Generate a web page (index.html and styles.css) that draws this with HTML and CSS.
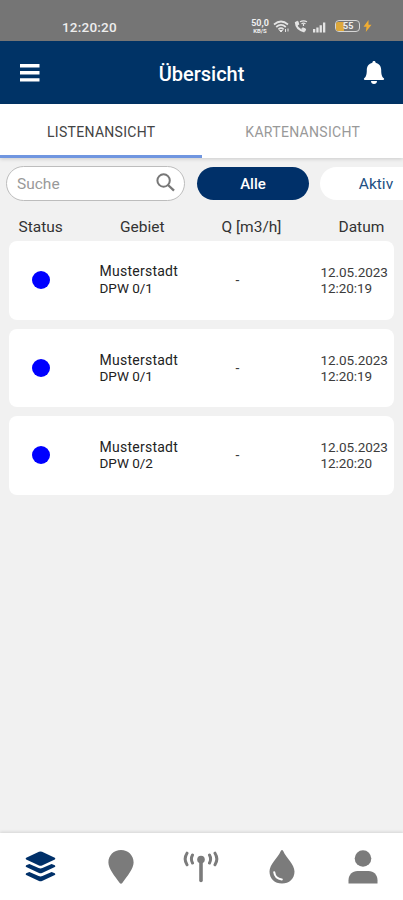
FILE: index.html
```
<!DOCTYPE html>
<html lang="de">
<head>
<meta charset="utf-8">
<title>Übersicht</title>
<link rel="stylesheet" href="styles.css">
</head>
<body>
<div class="statusbar">
  <span class="clock">12:20:20</span>
  <div class="system">
    <span class="speed"><b>50,0</b><b class="unit">KB/S</b></span>
    <svg class="wifi" width="17" height="13" viewBox="0 0 17 13" fill="none" stroke="#e4e4e4" stroke-width="1.7"><path d="M1 4.5Q8 -1.5 15 4.5M3.2 7Q8 2.8 12.8 7M5.4 9.3Q8 7 10.6 9.3"/><path d="M6.5 10.5h3L8 12zM12.5 9v3M15 8.5v3" fill="#e4e4e4" stroke-width="1"/></svg>
    <svg class="call" width="14" height="13" viewBox="0 0 14 13" fill="none" stroke="#e4e4e4"><path d="M1.8 2Q2 9.5 10.5 11.4" stroke-width="2"/><path d="M1 2.6L3.8 1.2 4.8 4.4 3 5.5M7.5 9.2l1.2-1.4 3 1.3-1 2.5" fill="#e4e4e4"/><path d="M6 1.8Q9.5 0 13 1.800M7.500 3.700Q9.500 2.500 11.500 3.700M9.500 4v2" stroke-width="1.200"/></svg>
    <svg class="signal" width="13" height="11" viewBox="0 0 13 11" fill="#e4e4e4"><path d="M0 7h2.300v3.500H0zM3.300 5.500h2.300v5H3.300zM6.600 3.300h2.300v7.200H6.600zM10 .5h2.300v10H10z"/></svg>
    <span class="battery"><i></i><b>55</b></span>
    <svg class="bolt" width="9" height="12" viewBox="0 0 9 12" fill="#efac32"><path d="M5.500 0L.5 6.700h3L2.800 12 8.500 4.800h-3z"/></svg>
  </div>
</div>
<header class="appbar">
  <svg class="menu" width="20" height="18" viewBox="0 0 20 18" fill="#fff"><path d="M0 0h19.500v3.400H0zM0 7h19.500v3.400H0zM0 14.200h19.500v3.400H0z"/></svg>
  <h1>Übersicht</h1>
  <svg class="bell" width="22" height="24" viewBox="0 0 22 24" fill="#fff"><path d="M11 0c1 0 1.600.7 1.600 1.700 3.600.8 5.600 3.700 5.600 7.300 0 5.200 1 7 2.600 8.300.7.7.2 1.800-.8 1.800H2c-1 0-1.500-1.100-.8-1.800C2.800 16 3.800 14.200 3.800 9c0-3.600 2-6.500 5.600-7.300C9.400.7 10 0 11 0zM8 20h6c0 1.800-1.200 3-3 3s-3-1.200-3-3z"/></svg>
</header>
<nav class="tabs">
  <a class="tab active"><span>LISTENANSICHT</span></a>
  <a class="tab"><span>KARTENANSICHT</span></a>
</nav>
<main>
  <div class="filters">
    <div class="search">
      <span>Suche</span>
      <svg width="19" height="19" viewBox="0 0 19 19" fill="none" stroke="#777" stroke-width="2"><circle cx="7.600" cy="7.500" r="6.200"/><path d="M12 12l6 5.700" stroke-width="2.300"/></svg>
    </div>
    <div class="chip selected">Alle</div>
    <div class="chip">Aktiv</div>
  </div>
  <div class="columns">
    <span>Status</span><span>Gebiet</span><span>Q [m3/h]</span><span>Datum</span>
  </div>
  <div class="list">
    <article class="card first"><i class="dot"></i><div class="area">Musterstadt<br><span>DPW 0/1</span></div><div class="flow">-</div><div class="date">12.05.2023<br>12:20:19</div></article>
    <article class="card"><i class="dot"></i><div class="area">Musterstadt<br><span>DPW 0/1</span></div><div class="flow">-</div><div class="date">12.05.2023<br>12:20:19</div></article>
    <article class="card"><i class="dot"></i><div class="area">Musterstadt<br><span>DPW 0/2</span></div><div class="flow">-</div><div class="date">12.05.2023<br>12:20:20</div></article>
  </div>
</main>
<footer class="bottomnav">
  <a><svg width="31" height="31" viewBox="0 0 31 31" fill="#003069"><path d="M14 .7q1.500-.6 3 0L29.800 6.800q1.200.9 0 1.800L17 14.500q-1.500.6-3 0L1.200 8.600q-1.200-.9 0-1.800z"/><path d="M1.200 14.300l3.200-1.400 9.200 4.100q1.900.8 3.800 0l9.200-4.100 3.200 1.400q1.200.9 0 1.800L17 22q-1.500.6-3 0L1.200 16.100q-1.200-.9 0-1.800z"/><path d="M1.200 22.300l3.200-1.400 9.200 4.100q1.900.8 3.800 0l9.200-4.100 3.200 1.400q1.200.9 0 1.800L17 30q-1.500.6-3 0L1.200 24.100q-1.200-.9 0-1.800z"/></svg></a>
  <a><svg width="26" height="34" viewBox="0 0 26 34" fill="#7b7b7b"><path d="M13 0c7.200 0 12.600 5.400 12.600 12.400 0 6-6 13.200-11.300 20.600q-1.300 1.500-2.600 0C6.400 25.600.4 18.400.4 12.400.4 5.400 5.800 0 13 0z"/></svg></a>
  <a><svg width="36" height="32" viewBox="0 0 36 32" fill="none" stroke="#7b7b7b" stroke-width="3" stroke-linecap="round"><path d="M4 2.200Q.3 8 4 13.800M9.500 4Q7.300 8 9.500 12M32 2.200Q35.700 8 32 13.800M26.500 4Q28.700 8 26.500 12"/><path d="M18 9v20.500" stroke-width="3.600"/><circle cx="18" cy="8.600" r="3.800" fill="#7b7b7b" stroke="none"/></svg></a>
  <a><svg width="26" height="34" viewBox="0 0 26 34"><path d="M11.800 1q1.200-2 2.400 0C17.400 8.300 25.500 14.500 25.500 21.500 25.500 28.600 20.200 33.600 13 33.600S.5 28.600.5 21.500C.5 14.500 8.600 8.300 11.800 1z" fill="#7b7b7b"/><path d="M5.200 22.200q.8 6.500 7.600 7.200" fill="none" stroke="#fff" stroke-width="2" stroke-linecap="round"/></svg></a>
  <a><svg width="30" height="34" viewBox="0 0 30 34" fill="#7b7b7b"><circle cx="15" cy="8.500" r="8.300"/><path d="M.5 33.500v-3.200c0-5.500 3.800-9.300 9-9.300h11c5.200 0 9 3.800 9 9.300v3.200z"/></svg></a>
</footer>
</body>
</html>
```
FILE: styles.css
```
* { box-sizing: border-box; }
body {
  margin: 0;
  width: 403px;
  height: 900px;
  overflow: hidden;
  display: flex;
  flex-direction: column;
  background: #f1f1f1;
  color: #333;
  font-family: Roboto, "Liberation Sans", sans-serif;
}
svg { display: block; flex: none; }

.statusbar {
  height: 41px;
  flex: none;
  display: flex;
  justify-content: space-between;
  padding: 0 31px 0 62px;
  background: #757575;
  color: #eee;
}
.clock { font-size: 13.5px; font-weight: 500; line-height: 16px; letter-spacing: .2px; padding-top: 19px; }
.system { display: flex; align-items: center; height: 16px; margin-top: 18px; }
.speed { display: flex; flex-direction: column; width: 20px; text-align: center; font-size: 9px; line-height: 9px; }
.speed .unit { font-size: 6px; line-height: 6px; }
.wifi { margin-left: 3px; }
.call { margin-left: 4px; }
.signal { margin: 2px 0 0 5px; }
.battery {
  display: flex;
  align-items: center;
  width: 25px;
  height: 12px;
  margin-left: 9px;
  border: 1.5px solid #d5d5d5;
  border-radius: 4px;
  font-size: 9px;
  line-height: 9px;
}
.battery i { width: 8px; height: 9px; background: #dda83b; border-radius: 2px 0 0 2px; }
.battery b { margin-left: -1px; }
.bolt { margin-left: 3px; }

.appbar {
  height: 63px;
  flex: none;
  display: flex;
  align-items: center;
  justify-content: space-between;
  padding: 0 18px 0 20px;
  background: #003366;
  color: #fff;
}
.appbar h1 { margin: 3px 0 0; font-size: 20px; font-weight: 500; line-height: 24px; }

.tabs { display: flex; height: 54px; flex: none; background: #fff; box-shadow: 0 1px 4px rgba(0,0,0,.16); }
.tab {
  flex: 1;
  display: flex;
  align-items: center;
  justify-content: center;
  border-bottom: 3px solid transparent;
  color: #999;
  font-size: 14px;
  letter-spacing: .3px;
  padding: 4px 0 0 1px;
}
.tab.active { color: #444; border-color: #7096e0; }

main { flex: 1; overflow: hidden; }
.filters { display: flex; width: 460px; padding: 8px 0 0 6px; }
.search {
  width: 179px;
  height: 35px;
  display: flex;
  align-items: center;
  justify-content: space-between;
  padding: 0 9px 0 10px;
  background: #fff;
  border: 1px solid #bdbdbd;
  border-radius: 18px;
  color: #999;
  font-size: 15.500px;
}
.search span { padding-top: 1px; }
.search svg { margin-top: -2px; }
.chip {
  width: 112px;
  height: 33px;
  margin: 1px 0 0 11px;
  border-radius: 17px;
  background: #fff;
  color: #224f83;
  font-size: 15.500px;
  line-height: 35px;
  text-align: center;
}
.chip.selected { margin-left: 12px; background: #003069; color: #fff; font-weight: 500; font-size: 15px; }

.columns { display: grid; grid-template-columns: 101.500px 101.500px 117px auto; padding-left: 18.500px; margin-top: 16px; height: 21px; font-size: 15.500px; line-height: 20px; }
.list { display: flex; flex-direction: column; gap: 9px; padding: 3px 9px 0; }
.card {
  height: 78.500px;
  display: grid;
  grid-template-columns: 90.500px 135px 86px auto;
  align-items: center;
  background: #fff;
  border-radius: 8px;
  line-height: 16px;
  color: #3c3c3c;
}
.dot { width: 18px; height: 18px; border-radius: 50%; background: #00f; margin-left: 22.500px; }
.area { font-size: 14px; letter-spacing: .25px; color: #222; }
.area span { font-size: 13.500px; letter-spacing: 0; }
.first .area { line-height: 17px; }
.flow { padding-left: 1px; font-size: 14px; }
.date { font-size: 13.500px; letter-spacing: -.05px; white-space: nowrap; }

.bottomnav {
  height: 67px;
  flex: none;
  display: grid;
  grid-template-columns: repeat(5, 1fr);
  background: #fff;
  box-shadow: 0 -1px 3px rgba(0,0,0,.12);
}
.bottomnav a { display: flex; align-items: center; justify-content: center; }
```
